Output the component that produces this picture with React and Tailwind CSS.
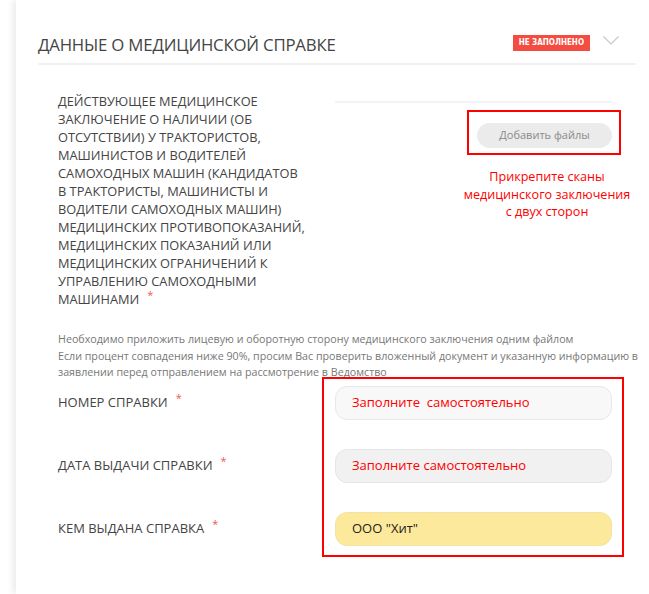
import React from 'react';

const longLabel = [
  'ДЕЙСТВУЮЩЕЕ МЕДИЦИНСКОЕ',
  'ЗАКЛЮЧЕНИЕ О НАЛИЧИИ (ОБ',
  'ОТСУТСТВИИ) У ТРАКТОРИСТОВ,',
  'МАШИНИСТОВ И ВОДИТЕЛЕЙ',
  'САМОХОДНЫХ МАШИН (КАНДИДАТОВ',
  'В ТРАКТОРИСТЫ, МАШИНИСТЫ И',
  'ВОДИТЕЛИ САМОХОДНЫХ МАШИН)',
  'МЕДИЦИНСКИХ ПРОТИВОПОКАЗАНИЙ,',
  'МЕДИЦИНСКИХ ПОКАЗАНИЙ ИЛИ',
  'МЕДИЦИНСКИХ ОГРАНИЧЕНИЙ К',
  'УПРАВЛЕНИЮ САМОХОДНЫМИ',
];

const Star = () => (
  <span className="ml-[8px] relative -top-[5px] text-[11px] text-[#f05a50]">*</span>
);

const fields = [
  { label: 'НОМЕР СПРАВКИ', value: 'Заполните  самостоятельно', bg: 'bg-[#f8f8f8] border-[#e8e8e8]', red: true },
  { label: 'ДАТА ВЫДАЧИ СПРАВКИ', value: 'Заполните самостоятельно', bg: 'bg-[#f1f1f1] border-[#e6e6e6]', red: true },
  { label: 'КЕМ ВЫДАНА СПРАВКА', value: 'ООО "Хит"', bg: 'bg-[#fde99b] border-[#f3e2a6]', red: false },
];

export default function App() {
  return (
    <div className="w-[649px] min-h-[594px] bg-white overflow-hidden font-['Open_Sans',sans-serif]">
      <div className="ml-[16px] min-h-[594px] bg-white shadow-[-4px_0_6px_rgba(0,0,0,0.07)] pl-[22px] pr-[13px] pt-[33px]">
        {/* Header */}
        <div className="flex items-start border-b-2 border-[#f2f2f2] pb-[6px]">
          <h2 className="text-[16.8px] leading-[24px] text-[#444] tracking-[-0.2px]">
            ДАННЫЕ О МЕДИЦИНСКОЙ СПРАВКЕ
          </h2>
          <span className="ml-auto mt-[2px] h-[16px] px-[6px] flex items-center bg-[#f44c40] text-white text-[8px] font-bold font-['DejaVu_Sans_Condensed',sans-serif]">
            НЕ ЗАПОЛНЕНО
          </span>
          <svg className="ml-[13px] mr-[17px] mt-[3px]" width="16" height="9" viewBox="0 0 16 9" fill="none">
            <polyline points="0.5,0.5 8,8 15.5,0.5" stroke="#c8c8c8" strokeWidth="1.2" />
          </svg>
        </div>

        {/* File upload row */}
        <div className="flex pl-[20px] mt-[27px]">
          <div className="w-[277px] shrink-0 text-[12.8px] leading-[18px] text-[#444] whitespace-nowrap">
            {longLabel.map((l) => (
              <div key={l}>{l}</div>
            ))}
            <div>
              МАШИНАМИ
              <Star />
            </div>
          </div>
          <div className="flex flex-col shrink-0">
            <div className="mt-[9px] h-[2px] w-[277px] bg-[#f3f3f3]" />
            <div className="mt-[7px] ml-[132px] w-[154px] h-[45px] border-2 border-[#f00] pt-[9px] pl-[8px]">
              <button className="w-[135px] h-[25px] rounded-full bg-[#ebebeb] text-[11px] text-[#8a8a8a]">
                Добавить файлы
              </button>
            </div>
            <div className="ml-[127px] w-[170px] mt-[13px] text-center text-[12.6px] leading-[17.5px] text-[#f00] whitespace-nowrap">
              Прикрепите сканы
              <br />
              медицинского заключения
              <br />
              с двух сторон
            </div>
          </div>
        </div>

        {/* Note */}
        <div className="pl-[20px] mt-[22px] text-[10.7px] leading-[16.5px] text-[#777] whitespace-nowrap">
          <div>Необходимо приложить лицевую и оборотную сторону медицинского заключения одним файлом</div>
          <div>Если процент совпадения ниже 90%, просим Вас проверить вложенный документ и указанную информацию в</div>
          <div>заявлении перед отправлением на рассмотрение в Ведомство</div>
        </div>

        {/* Fields */}
        <div className="flex items-start pl-[20px] -mt-[4px]">
          <div className="w-[264px] shrink-0 pt-[16px]">
            {fields.map((f) => (
              <div key={f.label} className="h-[63px] text-[13px] leading-[18px] text-[#444]">
                {f.label}
                <Star />
              </div>
            ))}
          </div>
          <div className="w-[302px] shrink-0 border-2 border-[#f00] pt-[7px] pl-[11px] pb-[9px] flex flex-col gap-[29px]">
            {fields.map((f) => (
              <div
                key={f.label}
                className={`w-[277px] h-[34px] rounded-[12px] border flex items-center pl-[16px] text-[13px] whitespace-pre ${f.bg} ${
                  f.red ? 'text-[#f00]' : 'text-[#222]'
                }`}
              >
                {f.value}
              </div>
            ))}
          </div>
        </div>
      </div>
    </div>
  );
}
